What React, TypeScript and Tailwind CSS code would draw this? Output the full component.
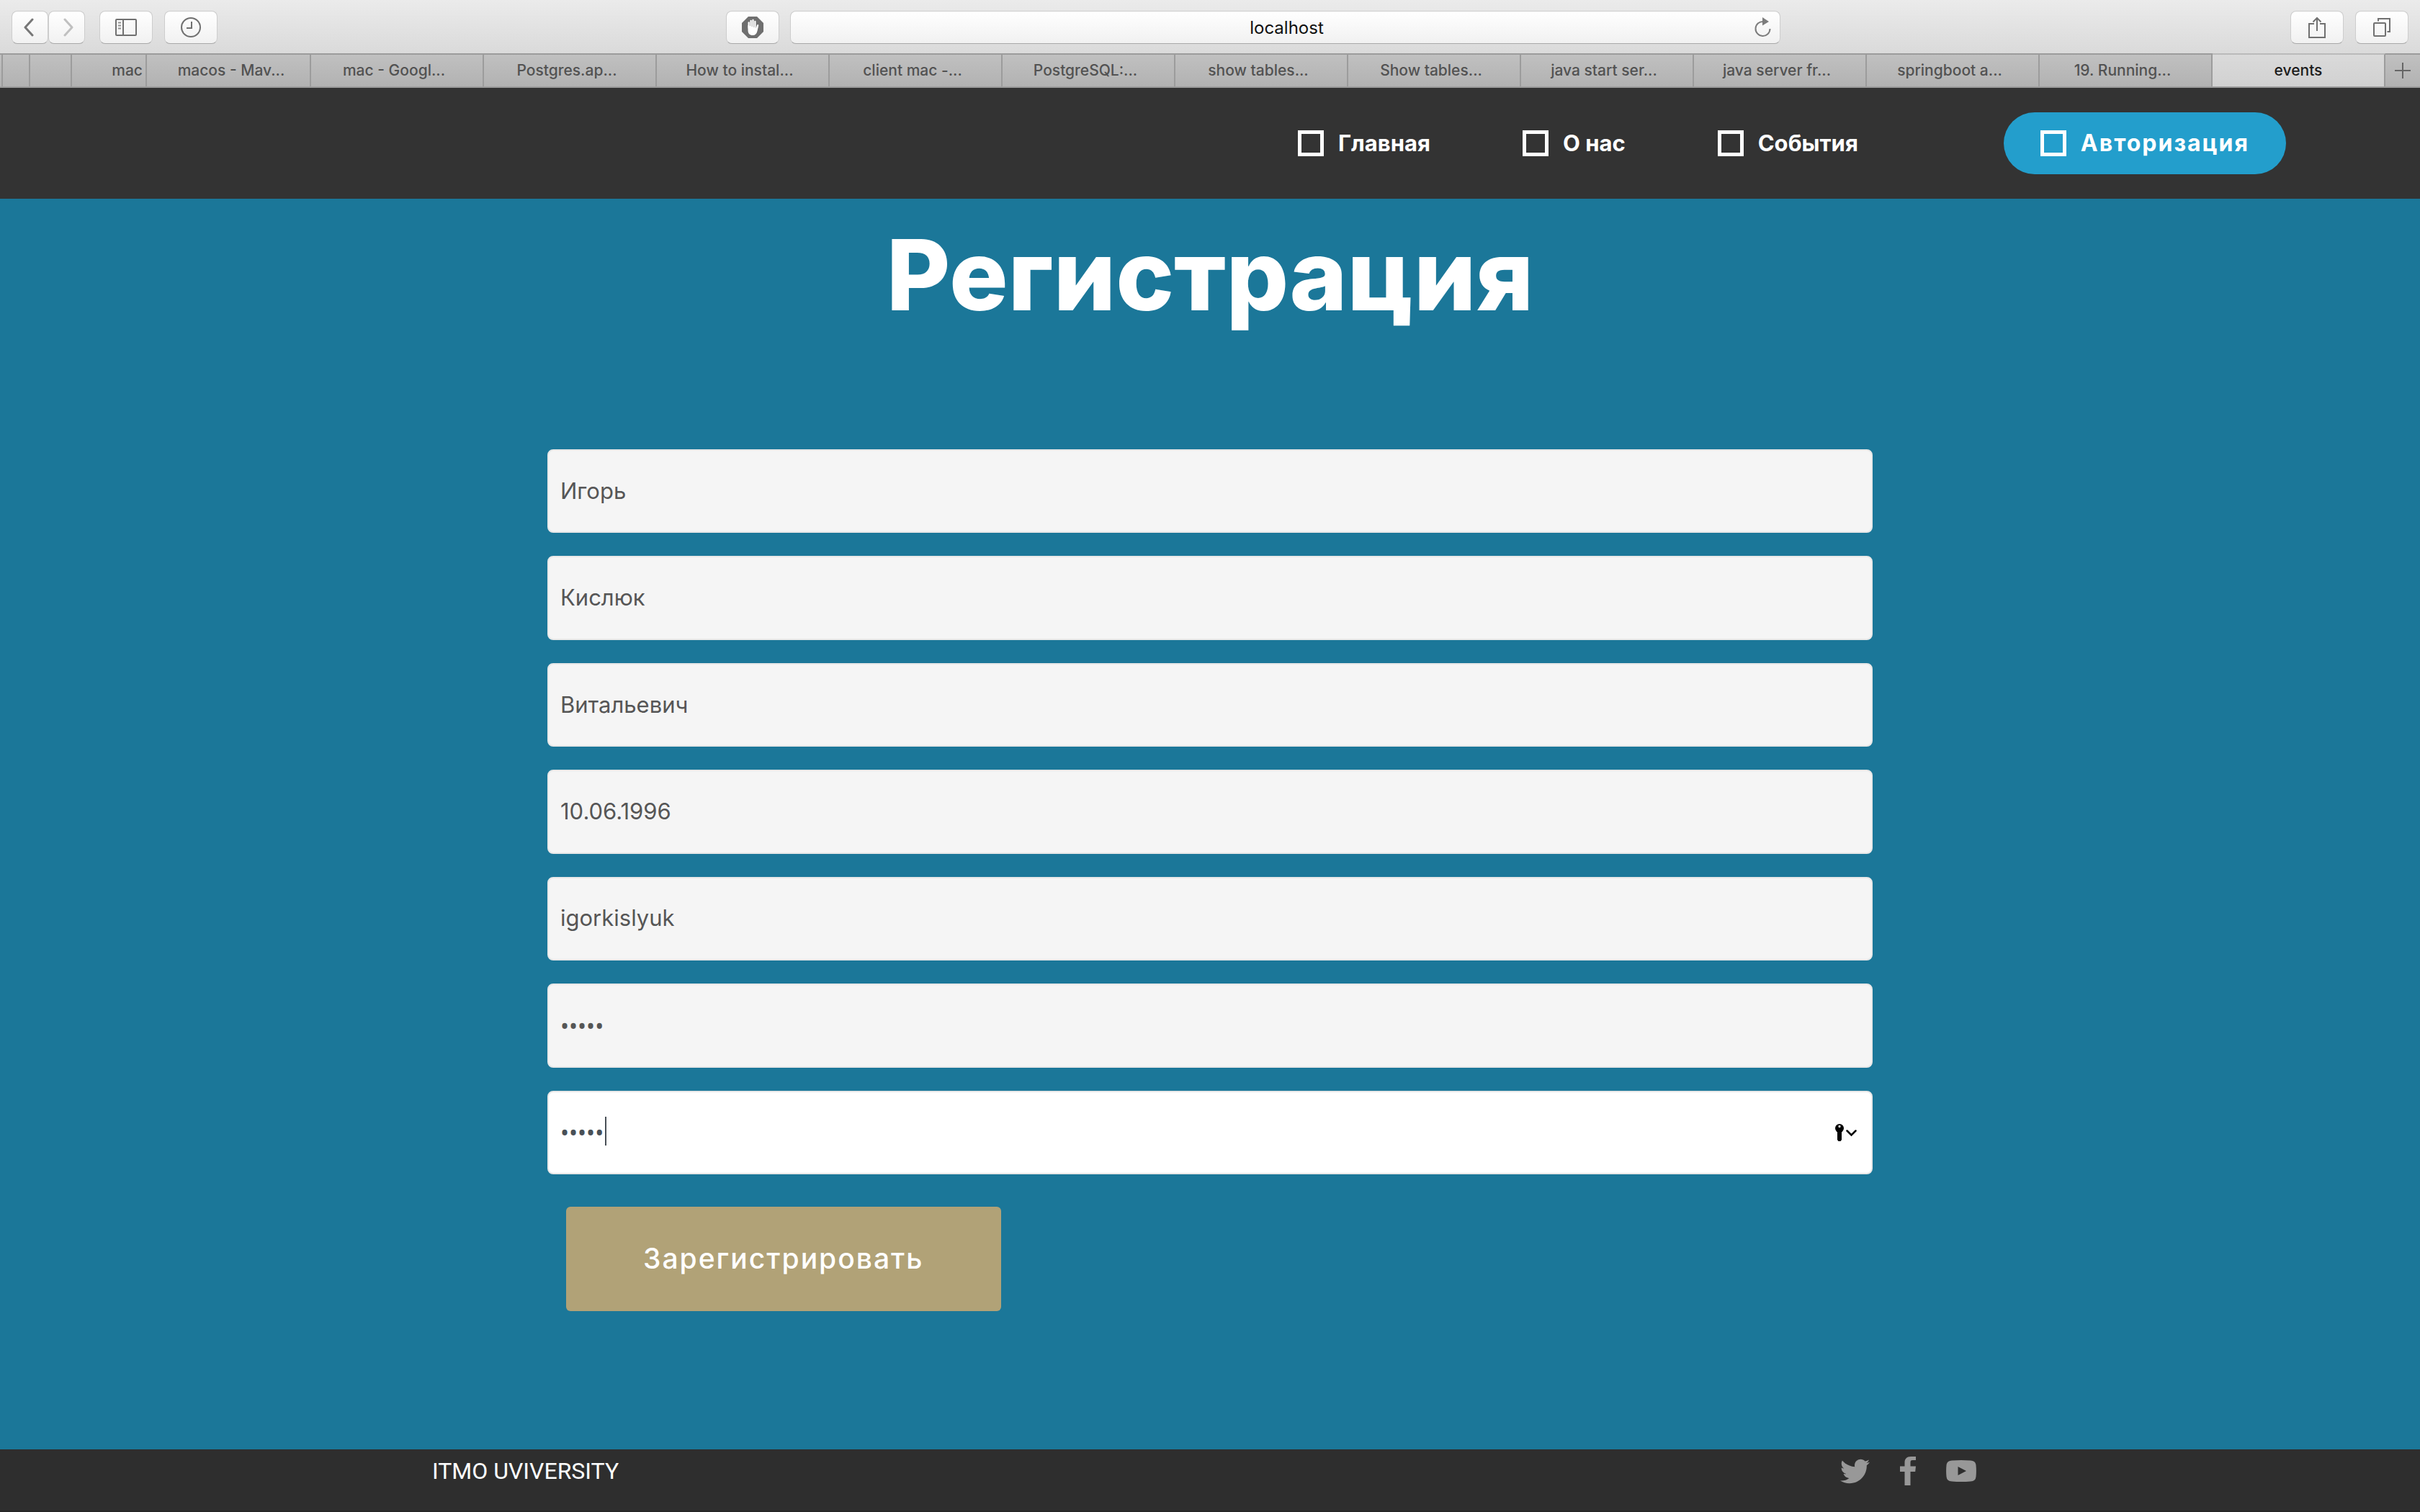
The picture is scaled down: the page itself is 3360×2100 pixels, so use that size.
import type { ReactNode } from 'react';
import { FaTwitter } from 'react-icons/fa';

function ToolButton({ label, className, children }: { label: string; className: string; children: ReactNode }) {
  return (
    <button
      type="button"
      aria-label={label}
      className={`flex h-[46px] items-center justify-center rounded-lg border border-[#cdcdcd] border-b-[#a8a8a8] bg-linear-to-b from-white to-[#f1f1f1] ${className}`}
    >
      {children}
    </button>
  );
}

function HandIcon() {
  return (
    <svg width="30" height="30" viewBox="0 0 30 30" aria-hidden="true">
      <path d="M9 0H21L30 9V21L21 30H9L0 21V9Z" fill="#6f6f6f" />
      <path d="M8.5 12V19C8.5 23.5 11 26 15 26C18.500 26 20.500 24 21.500 20L23.200 12.500C23.400 11 21.500 10.500 21 12L19.500 16Z" fill="#fff" />
      <g stroke="#fff" strokeWidth="2.300" strokeLinecap="round">
        <path d="M9.700 16V8.500" />
        <path d="M12.600 16V5.800" />
        <path d="M15.500 16V5" />
        <path d="M18.400 17V6.800" />
      </g>
    </svg>
  );
}

function Toolbar() {
  return (
    <div className="grid h-[74px] grid-cols-[1008fr_1464fr_888fr] items-center bg-linear-to-b from-[#ebebeb] to-[#dadada] pt-0.5">
      <div className="flex items-center pl-4">
        <ToolButton label="Back" className="w-[51px] pr-1">
          <svg width="14" height="26" viewBox="0 0 14 26" fill="none" stroke="#777" strokeWidth="3" strokeLinecap="round" strokeLinejoin="round">
            <path d="M12 2L2 13L12 24" />
          </svg>
        </ToolButton>
        <ToolButton label="Forward" className="w-[51px] pl-1">
          <svg width="14" height="26" viewBox="0 0 14 26" fill="none" stroke="#c0c0c0" strokeWidth="3" strokeLinecap="round" strokeLinejoin="round">
            <path d="M2 2L12 13L2 24" />
          </svg>
        </ToolButton>
        <ToolButton label="Sidebar" className="ml-5 w-[74px]">
          <svg width="30" height="24" viewBox="0 0 30 24" fill="none" stroke="#707070" strokeWidth="2">
            <rect x="1" y="1" width="28" height="22" rx="1" />
            <path d="M11 1V23" />
            <path d="M4 5.500H8M4 9.500H8M4 13.500H8" stroke="#909090" />
          </svg>
        </ToolButton>
        <ToolButton label="History" className="ml-4 w-[74px]">
          <svg width="28" height="28" viewBox="0 0 28 28" fill="none" stroke="#707070" strokeWidth="2">
            <circle cx="14" cy="14" r="13" />
            <path d="M15 6V15H8" />
          </svg>
        </ToolButton>
      </div>
      <div className="flex items-center gap-[15px]">
        <ToolButton label="Content blocker" className="w-[74px]">
          <HandIcon />
        </ToolButton>
        <div className="relative flex-1">
          <input
            type="text"
            aria-label="Address"
            defaultValue="localhost"
            className="h-[46px] w-full rounded-lg border border-[#cdcdcd] border-b-[#a8a8a8] bg-linear-to-b from-white to-[#f1f1f1] pl-1 text-center text-[24px] text-[#111]"
          />
          <button type="button" aria-label="Reload" className="absolute inset-y-0 right-3 flex items-center">
            <svg width="24" height="28" viewBox="0 0 24 28" fill="none">
              <path d="M21.500 16A10 10 0 1 1 12.500 6" stroke="#7c7c7c" strokeWidth="2" />
              <path d="M11 0L20 6L11 11.500Z" fill="#7c7c7c" />
            </svg>
          </button>
        </div>
      </div>
      <div className="flex items-center justify-end gap-4 pr-4">
        <ToolButton label="Share" className="w-[74px]">
          <svg width="24" height="30" viewBox="0 0 24 30" fill="none" stroke="#707070" strokeWidth="2">
            <path d="M8 10H1V29H23V10H16" />
            <path d="M12 20V2M6.500 7.500L12 2L17.500 7.500" />
          </svg>
        </ToolButton>
        <ToolButton label="Show all tabs" className="w-[74px]">
          <svg width="24" height="26" viewBox="0 0 24 26" fill="none" stroke="#707070" strokeWidth="2">
            <rect x="1" y="7" width="16" height="18" rx="1" />
            <path d="M7 4.500V1H23V19H19.500" />
          </svg>
        </ToolButton>
      </div>
    </div>
  );
}

const tabs = [
  'mac - Googl...',
  'Postgres.ap...',
  'How to instal...',
  'client mac -...',
  'PostgreSQL:...',
  'show tables...',
  'Show tables...',
  'java start ser...',
  'java server fr...',
  'springboot a...',
  '19. Running...',
];

const tabBase = 'flex h-full shrink-0 items-center border-r-2 border-[#9c9c9c]';

function TabBar() {
  return (
    <div className="flex h-12 items-stretch border-y-2 border-[#9c9c9c] bg-linear-to-b from-[#c0c0c0] to-[#b2b2b2] text-[21px] font-medium whitespace-nowrap text-[#525252]">
      <div className={`${tabBase} w-1`} />
      <div className={`${tabBase} w-[38px]`} />
      <div className={`${tabBase} w-[58px]`} />
      <button type="button" className={`${tabBase} w-[104px] justify-end pr-1`}>mac</button>
      <button type="button" className={`${tabBase} w-[228px] justify-center pl-2`}>macos - Mav...</button>
      {tabs.map((t) => (
        <button key={t} type="button" className="flex min-w-0 flex-1 items-center justify-center border-r-2 border-[#9c9c9c]">
          <span className="pr-2">{t}</span>
        </button>
      ))}
      <button
        type="button"
        aria-current="page"
        className="-mt-0.5 flex min-w-0 flex-1 items-center justify-center border-t-2 border-r-2 border-t-[#bababa] border-r-[#9c9c9c] bg-linear-to-b from-[#dadada] to-[#d1d1d1] text-[#1c1c1c]"
      >
        events
      </button>
      <button type="button" aria-label="New tab" className="flex w-12 items-center justify-center">
        <svg width="22" height="22" viewBox="0 0 22 22" stroke="#666" strokeWidth="2">
          <path d="M11 0V22M0 11H22" />
        </svg>
      </button>
    </div>
  );
}

function GlyphBox() {
  return <span aria-hidden="true" className="size-9 border-[5px] border-white" />;
}

function SiteHeader() {
  return (
    <header className="flex h-[154px] items-center justify-end bg-[#333] pr-[186px] text-[31px] font-bold text-white">
      <nav className="mr-[202px] flex items-center gap-32">
        {['Главная', 'О нас', 'События'].map((t) => (
          <a key={t} href="#" className="flex items-center gap-5">
            <GlyphBox />
            {t}
          </a>
        ))}
      </nav>
      <a href="#" className="flex h-[86px] items-center gap-5 rounded-full bg-[#239ecc] px-[51px] text-[32px] tracking-[2px]">
        <GlyphBox />
        Авторизация
      </a>
    </header>
  );
}

const fieldBase = 'h-full w-full rounded-lg border-2 border-[#e8e8e8] px-4 outline-none';

const fields = [
  { label: 'Имя', value: 'Игорь' },
  { label: 'Фамилия', value: 'Кислюк' },
  { label: 'Отчество', value: 'Витальевич' },
  { label: 'Дата рождения', value: '10.06.1996' },
  { label: 'Логин', value: 'igorkislyuk' },
];

function RegistrationForm() {
  return (
    <form className="mx-auto mt-[168px] w-[1840px] max-w-full">
      <div className="grid min-h-[1007px] auto-rows-fr gap-8 text-[31px]">
        {fields.map((f) => (
          <input key={f.label} type="text" aria-label={f.label} defaultValue={f.value} className={`${fieldBase} bg-[#f5f5f5] pb-0.5 text-[#565656]`} />
        ))}
        <input
          type="password"
          aria-label="Пароль"
          defaultValue="12345"
          className={`${fieldBase} bg-[#f5f5f5] font-['Noto_Sans',sans-serif] text-[32px] text-[#565656]`}
        />
        <div className="relative">
          <input
            type="password"
            aria-label="Повторите пароль"
            defaultValue="12345"
            className={`${fieldBase} bg-white font-['Noto_Sans',sans-serif] text-[32px] text-[#495057]`}
          />
          <span aria-hidden="true" className="absolute top-9 left-20 h-10 w-0.5 bg-[#495057]" />
          <button type="button" aria-label="Пароли" className="absolute inset-y-0 right-[22px] flex items-center">
            <svg width="30" height="24" viewBox="0 0 30 24" fill="none">
              <circle cx="6" cy="6" r="6" fill="#000" />
              <path d="M3 9H9V22L7.500 24H4.500L3 22Z" fill="#000" />
              <rect x="4.500" y="2" width="3" height="3" rx="1" fill="#fff" />
              <path d="M16.500 9.500L22.500 15.500L28.500 9.500" stroke="#000" strokeWidth="2.500" strokeLinecap="round" />
            </svg>
          </button>
        </div>
      </div>
      <button type="submit" className="mt-[45px] ml-[26px] h-[145px] rounded-md bg-[#b1a277] px-[107px] text-[39px] font-medium tracking-[2px] text-white">
        Зарегистрировать
      </button>
    </form>
  );
}

function SiteFooter() {
  return (
    <footer className="border-b-2 border-[#272727] bg-[#2e2e2e]">
      <div className="mx-auto flex h-[85px] w-[2160px] max-w-full items-start justify-between pt-[5px] pr-4">
        <p className="font-['Roboto',sans-serif] text-[32px] leading-[50px] text-white">ITMO UVIVERSITY</p>
        <div className="flex h-[50px] items-center gap-8 text-[#989898]">
          <a href="#" aria-label="Twitter" className="flex w-[42px] justify-center">
            <FaTwitter size={41} />
          </a>
          <a href="#" aria-label="Facebook" className="flex w-[42px] justify-center">
            <svg width="22" height="40" viewBox="0 0 22 40" fill="currentColor">
              <path d="M6.500 40V21H0V13.500H6.500V8.500C6.500 3 9.500 0 15 0H22V5H17.500C15 5 14.500 6 14.500 8.500V13.500H22L21.200 21H14.500V40Z" />
            </svg>
          </a>
          <a href="#" aria-label="YouTube" className="flex w-[42px] justify-center">
            <svg width="42" height="30" viewBox="0 0 42 30" fill="currentColor" fillRule="evenodd">
              <path d="M8 0.500Q21 -0.500 34 0.500Q41 1 41.500 7Q42.300 15 41.500 23Q41 29 34 29.500Q21 30.500 8 29.500Q1 29 0.500 23Q-0.300 15 0.500 7Q1 1 8 0.500ZM16.500 9V21L28 15Z" />
            </svg>
          </a>
        </div>
      </div>
    </footer>
  );
}

export default function App() {
  return (
    <div className="flex min-h-screen flex-col font-['Inter',sans-serif]">
      <Toolbar />
      <TabBar />
      <SiteHeader />
      <main className="flex-1 bg-[#1b7799] pt-8 pb-12">
        <h1 className="text-center text-[136px] leading-[148px] font-extrabold text-white">Регистрация</h1>
        <RegistrationForm />
      </main>
      <SiteFooter />
    </div>
  );
}
